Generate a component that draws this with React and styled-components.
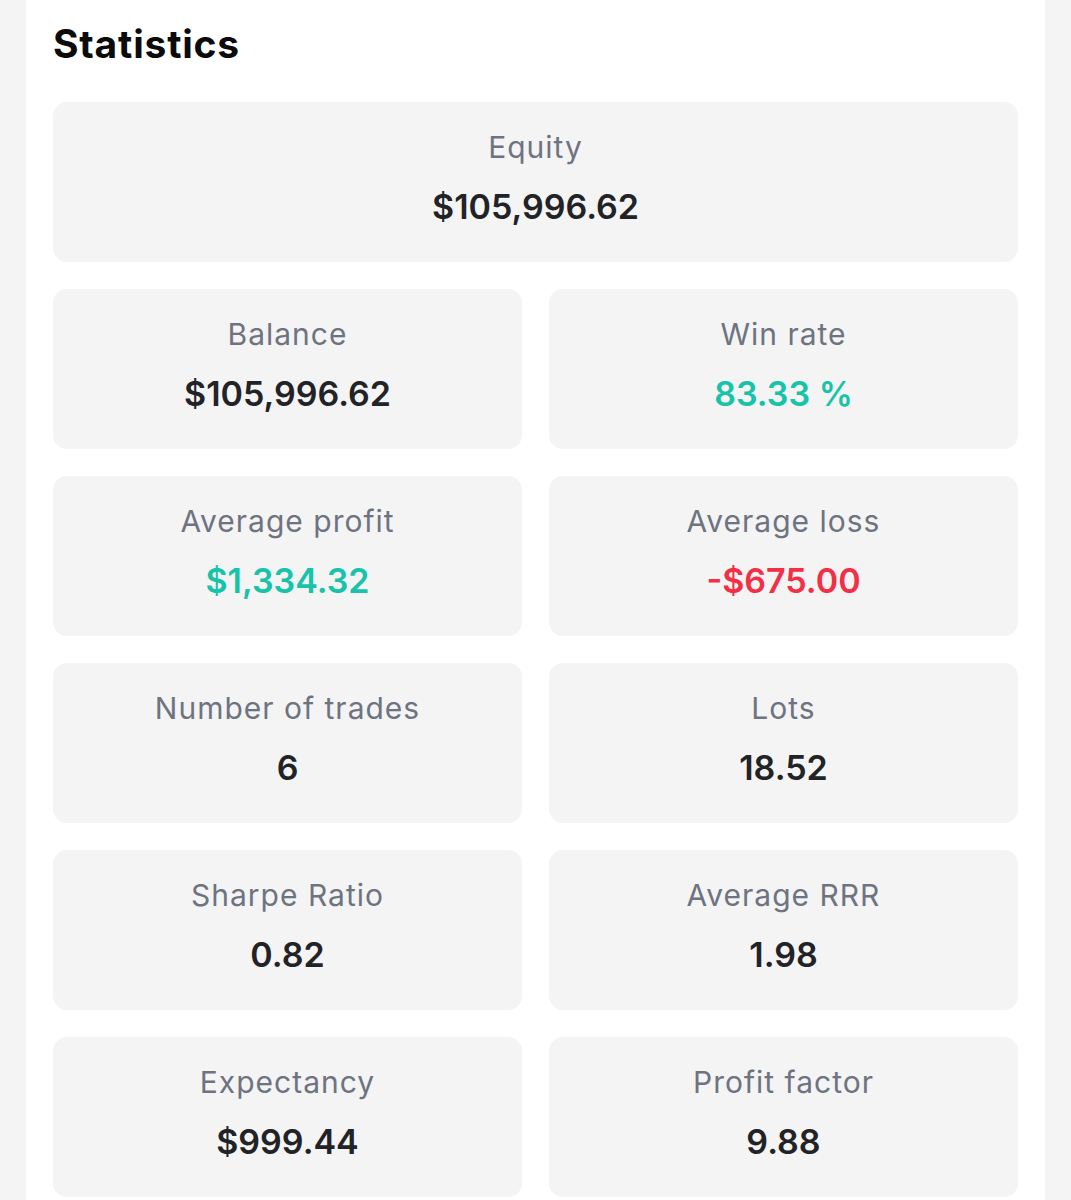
import React from 'react';
import styled, { createGlobalStyle } from 'styled-components';

const GlobalStyle = createGlobalStyle`
  html, body {
    margin: 0;
    padding: 0;
    background: #f4f4f5;
  }
  body {
    font-family: Inter, "Noto Sans", sans-serif;
  }
`;

const Page = styled.div`
  display: flex;
  padding-left: 26px;
  width: 1045px;
  box-sizing: border-box;
`;

const Panel = styled.section`
  flex: 1;
  background: #ffffff;
  padding: 19px 27px 30px;
  min-height: 1200px;
  box-sizing: border-box;
`;

const Title = styled.h2`
  margin: 0 0 34px;
  font-size: 39px;
  line-height: 49px;
  font-weight: 700;
  color: #0b0b0c;
  letter-spacing: 0.8px;
`;

const Grid = styled.div`
  display: grid;
  grid-template-columns: 1fr 1fr;
  gap: 27px;
`;

const Card = styled.div`
  grid-column: ${(p) => (p.$wide ? '1 / -1' : 'auto')};
  height: 160px;
  box-sizing: border-box;
  padding-top: 25px;
  display: flex;
  flex-direction: column;
  align-items: center;
  gap: 19px;
  background: #f4f4f5;
  border-radius: 14px;
`;

const Label = styled.div`
  font-size: 30px;
  line-height: 40px;
  font-weight: 400;
  color: #6e7380;
  letter-spacing: 1px;
`;

const toneColor = {
  up: '#17c3a9',
  down: '#f22f46',
  plain: '#222326',
};

const Value = styled.div`
  font-size: 34px;
  line-height: 42px;
  font-weight: 600;
  color: ${(p) => toneColor[p.$tone || 'plain']};
  letter-spacing: 0;
`;

const stats = [
  { label: 'Equity', value: '$105,996.62', wide: true },
  { label: 'Balance', value: '$105,996.62' },
  { label: 'Win rate', value: '83.33 %', tone: 'up' },
  { label: 'Average profit', value: '$1,334.32', tone: 'up' },
  { label: 'Average loss', value: '-$675.00', tone: 'down' },
  { label: 'Number of trades', value: '6' },
  { label: 'Lots', value: '18.52' },
  { label: 'Sharpe Ratio', value: '0.82' },
  { label: 'Average RRR', value: '1.98' },
  { label: 'Expectancy', value: '$999.44' },
  { label: 'Profit factor', value: '9.88' },
];

const App = () => (
  <>
    <GlobalStyle />
    <Page>
      <Panel>
        <Title>Statistics</Title>
        <Grid>
          {stats.map((s) => (
            <Card key={s.label} $wide={s.wide}>
              <Label>{s.label}</Label>
              <Value $tone={s.tone}>{s.value}</Value>
            </Card>
          ))}
        </Grid>
      </Panel>
    </Page>
  </>
);

export default App;
